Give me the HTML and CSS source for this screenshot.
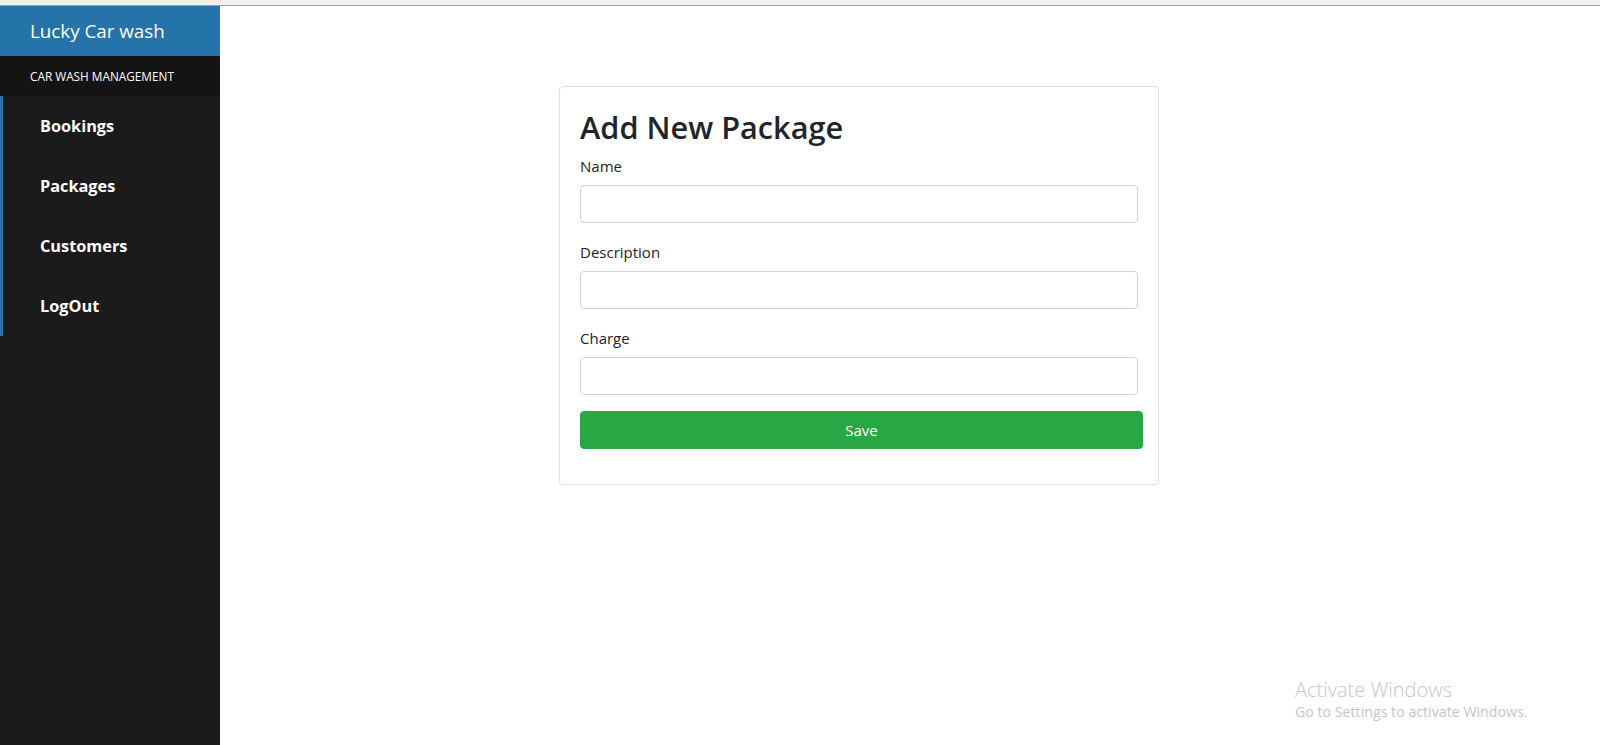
FILE: index.html
```html
<!DOCTYPE html>
<html lang="en">
<head>
<meta charset="utf-8">
<title>Lucky Car wash</title>
<link rel="stylesheet" href="styles.css">
</head>
<body>
<div class="topbar"></div>
<div class="app">
  <aside class="sidebar">
    <div class="brand">Lucky Car wash</div>
    <div class="subtitle">CAR WASH MANAGEMENT</div>
    <nav class="nav">
      <a class="nav-item" href="#">Bookings</a>
      <a class="nav-item" href="#">Packages</a>
      <a class="nav-item" href="#">Customers</a>
      <a class="nav-item" href="#">LogOut</a>
    </nav>
  </aside>
  <main class="main">
    <div class="card">
      <h2 class="card-title">Add New Package</h2>
      <form class="form">
        <div class="form-group">
          <label class="label">Name</label>
          <input class="input" type="text">
        </div>
        <div class="form-group">
          <label class="label">Description</label>
          <input class="input" type="text">
        </div>
        <div class="form-group form-group-last">
          <label class="label">Charge</label>
          <input class="input" type="text">
        </div>
        <button class="btn-save" type="button">Save</button>
      </form>
    </div>
  </main>
</div>
<div class="watermark">
  <div class="wm-title">Activate Windows</div>
  <div class="wm-sub">Go to Settings to activate Windows.</div>
</div>
</body>
</html>
```

FILE: styles.css
```css
* { box-sizing: border-box; }
html, body { margin: 0; padding: 0; height: 100%; }
body {
  font-family: "Open Sans", "Noto Sans", sans-serif;
  color: #212529;
  background: #fff;
  overflow: hidden;
}
.topbar {
  height: 6px;
  background: #f0f0f0;
  border-bottom: 1px solid #a0a0a0;
}
.app {
  display: flex;
  height: 739px;
}
.sidebar {
  width: 220px;
  flex: 0 0 220px;
  background: #1b1b1b;
  display: flex;
  flex-direction: column;
}
.brand {
  height: 50px;
  background: #2574a9;
  color: #fff;
  font-size: 18.8px;
  padding-left: 30px;
  display: flex;
  align-items: center;
}
.subtitle {
  height: 40px;
  background: #141414;
  color: #fff;
  font-size: 11.8px;
  padding-left: 30px;
  display: flex;
  align-items: center;
}
.nav {
  display: flex;
  flex-direction: column;
  border-left: 3px solid #2574a9;
}
.nav-item {
  height: 60px;
  display: flex;
  align-items: center;
  padding-left: 37px;
  color: #fff;
  font-weight: 700;
  font-size: 16.3px;
  text-decoration: none;
}
.main {
  flex: 1;
  padding: 80px 0 0 339px;
}
.card {
  width: 600px;
  border: 1px solid #dfdfdf;
  border-radius: 4px;
  padding: 21px 20px 20px;
}
.card-title {
  margin: 0 0 8px 0;
  font-size: 30.7px;
  font-weight: 600;
  line-height: 38px;
}
.form { margin-bottom: 15px; }
.form-group { margin-bottom: 17px; }
.form-group-last { margin-bottom: 16px; }
.label {
  display: block;
  font-size: 15px;
  line-height: 24px;
  margin-bottom: 7px;
}
.input {
  display: block;
  width: 100%;
  height: 38px;
  border: 1px solid #ced4da;
  border-radius: 4px;
  background: #fff;
  font: inherit;
}
.btn-save {
  display: block;
  width: calc(100% + 5px);
  height: 38px;
  background: #28a745;
  border: 1px solid #28a745;
  border-radius: 4px;
  color: #fff;
  font-family: inherit;
  font-size: 15px;
}
.watermark {
  position: absolute;
  left: 1295px;
  top: 677px;
  color: #c6c6c6;
}
.wm-title { font-size: 20px; font-weight: 300; line-height: 25px; }
.wm-sub { font-size: 14.2px; line-height: 20px; }
```
